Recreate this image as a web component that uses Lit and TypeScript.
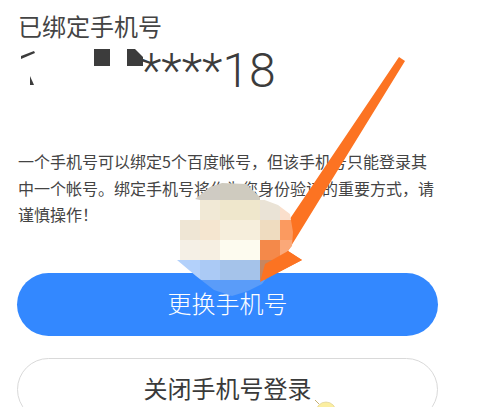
import { LitElement, html, css, svg } from "lit";
import { customElement } from "lit/decorators.js";

const tiles: [number, number, number, number, string][] = [
  [190, 180, 30, 20, "#cfcbc3"],
  [220, 180, 40, 20, "#cfcbbf"],
  [200, 200, 20, 20, "#f1e9d6"],
  [220, 200, 40, 20, "#efe7cc"],
  [260, 200, 20, 20, "#eae3d6"],
  [280, 200, 20, 20, "#fadfcc"],
  [180, 220, 20, 20, "#efe6d5"],
  [200, 220, 20, 20, "#f5e6d0"],
  [220, 220, 40, 20, "#f6eedc"],
  [260, 220, 20, 20, "#efdcc0"],
  [280, 220, 20, 20, "#fb9a60"],
  [180, 240, 20, 20, "#f5f0e6"],
  [200, 240, 20, 20, "#f6efe2"],
  [220, 240, 40, 20, "#fdfbef"],
  [260, 240, 20, 20, "#f4894a"],
  [280, 240, 20, 20, "#fba878"],
  [170, 260, 30, 20, "#b3d1fb"],
  [200, 260, 20, 20, "#abcaf5"],
  [220, 260, 40, 20, "#a5c3ea"],
  [260, 260, 20, 20, "#c78660"],
  [170, 280, 130, 20, "#5a9cf9"],
];

@customElement("app-root")
export class AppRoot extends LitElement {
  static styles = css`
    :host {
      display: block;
      position: relative;
      width: 479px;
      height: 407px;
      overflow: hidden;
      background: #fff;
      font-family: "Noto Sans CJK SC", Roboto, sans-serif;
      color: #333;
    }
    .page {
      display: flex;
      flex-direction: column;
      padding: 9px 41px 0 17px;
    }
    .label {
      font-size: 24px;
      line-height: 34px;
      padding-left: 1px;
      color: #444;
    }
    .number {
      font-family: Roboto, sans-serif;
      font-size: 48px;
      line-height: 56px;
      height: 56px;
      padding-left: 124px;
      color: #3c3c3c;
      font-weight: 300;
    }
    .desc {
      margin: 49px 0 0;
      padding-left: 1px;
      font-size: 16px;
      line-height: 26.5px;
      color: #444;
    }
    .btn {
      height: 63px;
      box-sizing: border-box;
      border-radius: 32px;
      display: flex;
      align-items: center;
      justify-content: center;
      font-size: 24px;
      padding-bottom: 3px;
    }
    .primary {
      margin-top: 45px;
      background: #3388ff;
      color: #fff;
      font-weight: 300;
    }
    .secondary {
      margin-top: 22px;
      background: #fff;
      border: 1px solid #d9d9d9;
      color: #3a3a3a;
    }
    .overlay {
      position: absolute;
      inset: 0;
      width: 479px;
      height: 407px;
    }
  `;

  render() {
    return html`
      <div class="page">
        <div class="label">已绑定手机号</div>
        <div class="number">****18</div>
        <p class="desc">一个手机号可以绑定5个百度帐号，但该手机号只能登录其中一个帐号。绑定手机号将作为您身份验证的重要方式，请谨慎操作！</p>
        <div class="btn primary">更换手机号</div>
        <div class="btn secondary">关闭手机号登录</div>
      </div>
      <svg class="overlay" viewBox="0 0 479 407">
        <defs>
          <clipPath id="blob">
            <path d="M195 199 L210 187 L222 183 L246 184 L262 199 L278 205 L290 214 L293 232 L292 246 L282 258 L262 284 L248 291 L232 296 L214 290 L196 276 L177 260 L180 220 L200 220 L200 200 Z" />
          </clipPath>
        </defs>
        <path d="M21 56 L34 51 L35 53 L21 59 Z" fill="#3c3c3c" />
        <path d="M30 76 L34 85 L30 85 Z" fill="#3c3c3c" />
        <rect x="94" y="49" width="16" height="17" fill="#3c3c3c" />
        <path d="M127 49 L135 49 L143 57 L143 66 L127 66 Z" fill="#3c3c3c" />
        <path d="M399 57 L405 61 L288 251 L302 260 L260 282 L262 238 L281 232 Z" fill="#fc7322" />
        <g clip-path="url(#blob)">
          ${tiles.map(
            ([x, y, w, h, c]) => svg`<rect x=${x} y=${y} width=${w} height=${h} fill=${c} />`
          )}
        </g>
        <path d="M260 282 L302 260 L288 251 L265 264 Z" fill="#fc7322" />
        <circle cx="326" cy="412" r="10" fill="#fbeea0" stroke="#d9c98a" stroke-width="0.6" />
        <path d="M315 400 L319 404" stroke="#b59a50" stroke-width="0.8" fill="none" />
      </svg>
    `;
  }
}
